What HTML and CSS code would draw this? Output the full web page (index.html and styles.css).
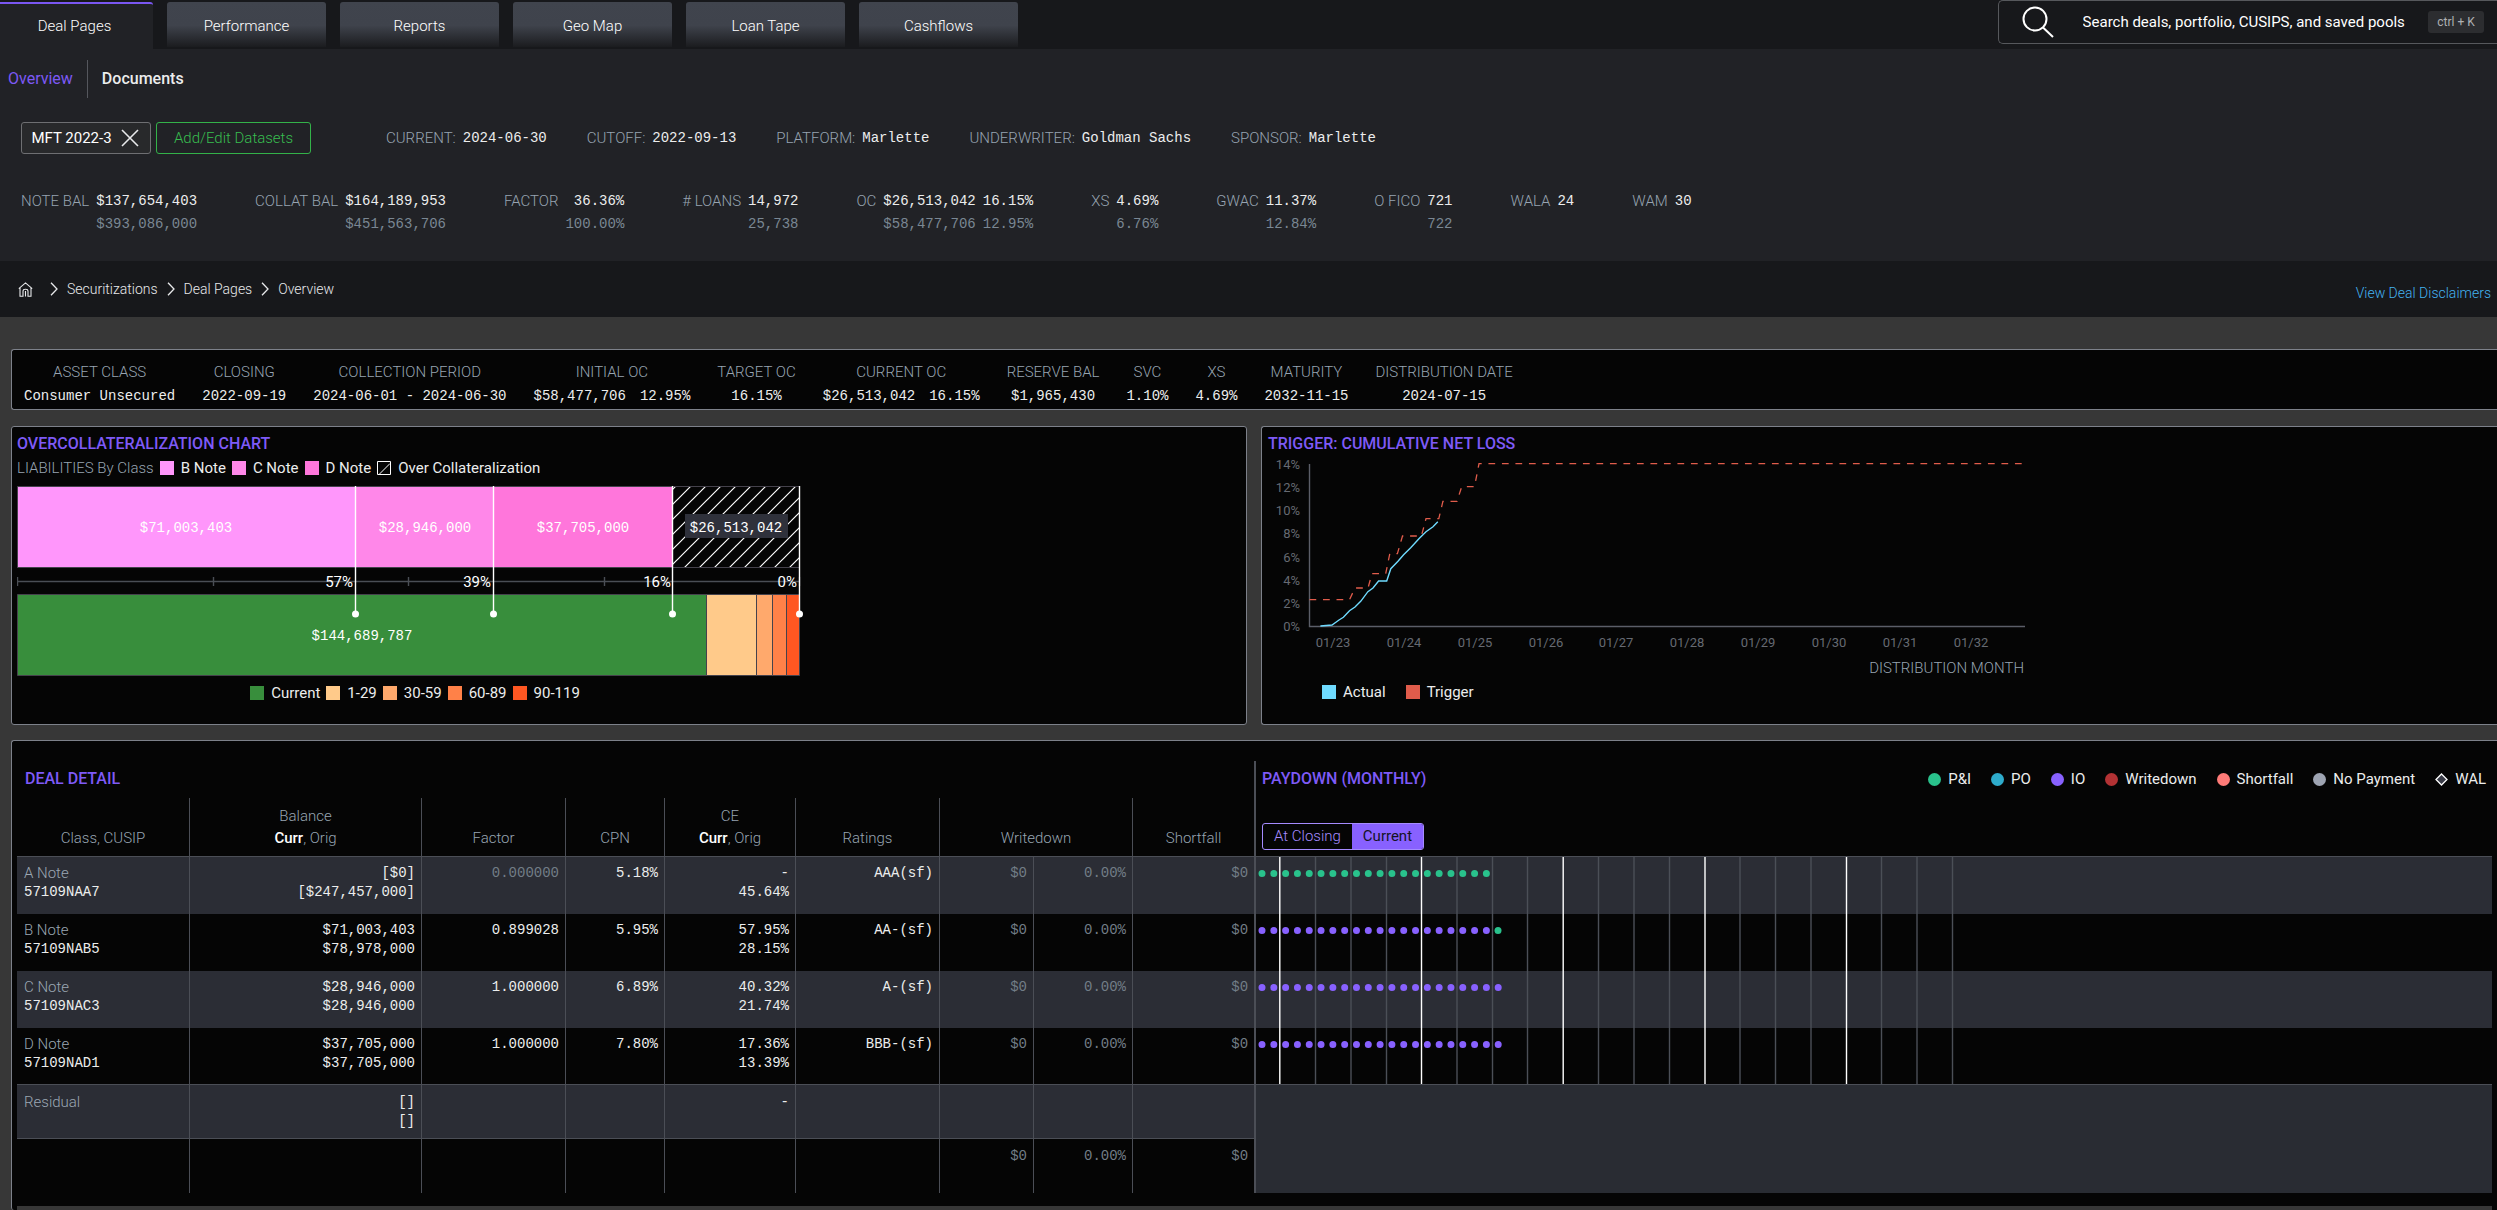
FILE: index.html
```html
<!DOCTYPE html>
<html lang="en">
<head>
<meta charset="utf-8">
<meta name="viewport" content="width=device-width, initial-scale=1">
<title>MFT 2022-3 | Deal Pages</title>
<link rel="stylesheet" href="styles.css">
</head>
<body>
<header class="topbar">
  <nav class="tabs" aria-label="Main">
    <a class="tab tab-active" href="#deal">Deal Pages</a>
    <a class="tab" href="#performance">Performance</a>
    <a class="tab" href="#reports">Reports</a>
    <a class="tab" href="#geo">Geo Map</a>
    <a class="tab" href="#tape">Loan Tape</a>
    <a class="tab" href="#cashflows">Cashflows</a>
  </nav>
  <label class="search">
    <svg class="search-icon" width="32" height="32" viewBox="0 0 32 32" fill="none" stroke="#fff" stroke-width="2" aria-hidden="true"><circle cx="13" cy="13" r="11.5"/><path d="M21 21.5L31 31"/></svg>
    <input class="search-input" type="text" aria-label="Search" placeholder="Search deals, portfolio, CUSIPS, and saved pools">
    <kbd class="kbd">ctrl + K</kbd>
  </label>
</header>

<section class="deal-head">
  <nav class="subnav" aria-label="Deal">
    <a class="subnav-link subnav-active" href="#overview">Overview</a>
    <a class="subnav-link" href="#documents">Documents</a>
  </nav>
  <div class="deal-row">
    <div class="dataset-actions">
      <button class="chip" type="button">MFT 2022-3
        <svg width="18" height="18" viewBox="0 0 18 18" fill="none" stroke="#e8e9eb" stroke-width="1.6" aria-hidden="true"><path d="M1 1l16 16M17 1L1 17"/></svg>
      </button>
      <button class="chip chip-add" type="button">Add/Edit Datasets</button>
    </div>
    <dl class="facts">
      <div class="fact"><dt>CURRENT:</dt><dd>2024-06-30</dd></div>
      <div class="fact"><dt>CUTOFF:</dt><dd>2022-09-13</dd></div>
      <div class="fact"><dt>PLATFORM:</dt><dd>Marlette</dd></div>
      <div class="fact"><dt>UNDERWRITER:</dt><dd>Goldman Sachs</dd></div>
      <div class="fact"><dt>SPONSOR:</dt><dd>Marlette</dd></div>
    </dl>
  </div>
  <dl class="stats">
    <div class="stat"><dt>NOTE BAL</dt><dd>$137,654,403<span class="orig">$393,086,000</span></dd></div>
    <div class="stat"><dt>COLLAT BAL</dt><dd>$164,189,953<span class="orig">$451,563,706</span></dd></div>
    <div class="stat"><dt>FACTOR</dt><dd>36.36%<span class="orig">100.00%</span></dd></div>
    <div class="stat"><dt># LOANS</dt><dd>14,972<span class="orig">25,738</span></dd></div>
    <div class="stat"><dt>OC</dt><dd>$26,513,042<span class="orig">$58,477,706</span></dd><dd>16.15%<span class="orig">12.95%</span></dd></div>
    <div class="stat"><dt>XS</dt><dd>4.69%<span class="orig">6.76%</span></dd></div>
    <div class="stat"><dt>GWAC</dt><dd>11.37%<span class="orig">12.84%</span></dd></div>
    <div class="stat"><dt>O FICO</dt><dd>721<span class="orig">722</span></dd></div>
    <div class="stat"><dt>WALA</dt><dd>24</dd></div>
    <div class="stat"><dt>WAM</dt><dd>30</dd></div>
  </dl>
</section>

<div class="crumb-bar">
  <nav class="crumbs" aria-label="Breadcrumb">
    <a class="crumb-home" href="#home" aria-label="Home"><svg width="15" height="15" viewBox="0 0 15 15" fill="none" stroke="#e8e9eb" stroke-width="1.1" aria-hidden="true"><path d="M.8 6.6L7.5.9l6.7 5.7M2 5.8v8.5h3V9.2c0-1.2 1-1.9 2.500-1.900s2.500.7 2.500 1.900v5.100h3V5.8M7.5 9v5.500"/></svg></a>
    <svg class="chev" width="8" height="14" viewBox="0 0 8 14" aria-hidden="true"><path d="M1 .7L7 7l-6 6.3"/></svg>
    <a href="#securitizations">Securitizations</a>
    <svg class="chev" width="8" height="14" viewBox="0 0 8 14" aria-hidden="true"><path d="M1 .7L7 7l-6 6.3"/></svg>
    <a href="#deal">Deal Pages</a>
    <svg class="chev" width="8" height="14" viewBox="0 0 8 14" aria-hidden="true"><path d="M1 .7L7 7l-6 6.3"/></svg>
    <a href="#overview">Overview</a>
  </nav>
  <a class="disclaimers" href="#disclaimers">View Deal Disclaimers</a>
</div>

<main class="content">
  <dl class="panel summary">
    <div><dt>ASSET CLASS</dt><dd>Consumer Unsecured</dd></div>
    <div><dt>CLOSING</dt><dd>2022-09-19</dd></div>
    <div><dt>COLLECTION PERIOD</dt><dd>2024-06-01 - 2024-06-30</dd></div>
    <div><dt>INITIAL OC</dt><dd class="pair"><span>$58,477,706</span><span>12.95%</span></dd></div>
    <div><dt>TARGET OC</dt><dd>16.15%</dd></div>
    <div><dt>CURRENT OC</dt><dd class="pair"><span>$26,513,042</span><span>16.15%</span></dd></div>
    <div><dt>RESERVE BAL</dt><dd>$1,965,430</dd></div>
    <div><dt>SVC</dt><dd>1.10%</dd></div>
    <div><dt>XS</dt><dd>4.69%</dd></div>
    <div><dt>MATURITY</dt><dd>2032-11-15</dd></div>
    <div><dt>DISTRIBUTION DATE</dt><dd>2024-07-15</dd></div>
  </dl>

  <div class="charts">
    <section class="panel chart-panel">
      <h2 class="title">OVERCOLLATERALIZATION CHART</h2>
      <div class="legend">
        <span class="legend-head">LIABILITIES By Class</span>
        <span class="key"><i class="swatch sw-b"></i>B Note</span>
        <span class="key"><i class="swatch sw-c"></i>C Note</span>
        <span class="key"><i class="swatch sw-d"></i>D Note</span>
        <span class="key"><svg width="14" height="14" viewBox="0 0 14 14" fill="none" stroke="#fff" aria-hidden="true"><path d="M.5.5h13v13H.5zM2.5 13L13 2.5"/></svg>Over Collateralization</span>
      </div>
      <svg class="oc-chart" width="788" height="192" viewBox="0 0 788 192" role="img" aria-label="Liabilities and assets">
        <defs>
          <pattern id="hatch" width="15" height="15" patternUnits="userSpaceOnUse"><path d="M-1 16L16 -1M-1 1L1 -1M14 16L16 14" stroke="#fff" stroke-width="1.2"/></pattern>
        </defs>
        <g stroke="#45424c">
          <path fill="#ff96fb" d="M.5 1.5h338v81H.5z"/>
          <path fill="#ff87e9" d="M338.5 1.5h138v81h-138z"/>
          <path fill="#ff76db" d="M476.5 1.5h179v81h-179z"/>
          <path fill="url(#hatch)" d="M655.5 1.5h127v81h-127z"/>
          <path fill="#388e3c" d="M.5 109.5h689v81H.5z"/>
          <path fill="#ffca8a" d="M689.5 109.5h50v81h-50z"/>
          <path fill="#ffa96c" d="M739.5 109.5h16v81h-16z"/>
          <path fill="#ff8148" d="M755.5 109.5h14v81h-14z"/>
          <path fill="#ff5722" d="M769.5 109.5h13v81h-13z"/>
        </g>
        <path d="M.5 96.5h782M.5 92v9M196.5 92v9M391.5 92v9M587.5 92v9M782.5 92v9" stroke="#4a4e55" stroke-width="1.4" fill="none"/>
        <path d="M338.5 1v128M476.5 1v128M655.5 1v128M782.5 1v128" stroke="#fff" stroke-width="1.4"/>
        <g fill="#fff"><circle cx="338.5" cy="129" r="3.5"/><circle cx="476.5" cy="129" r="3.5"/><circle cx="655.5" cy="129" r="3.5"/><circle cx="782.5" cy="129" r="3.5"/></g>
        <path d="M668 29h103v24H668z" fill="#2f313b"/>
        <g class="svg-mono" text-anchor="middle"><text x="169" y="47">$71,003,403</text><text x="408" y="47">$28,946,000</text><text x="566" y="47">$37,705,000</text><text x="719" y="47">$26,513,042</text><text x="345" y="155">$144,689,787</text></g>
        <g class="svg-label" text-anchor="end"><text x="336" y="102">57%</text><text x="474" y="102">39%</text><text x="654" y="102">16%</text><text x="780" y="102">0%</text></g>
      </svg>
      <div class="legend legend-oc">
        <span class="key"><i class="swatch sw-current"></i>Current</span>
        <span class="key"><i class="swatch sw-29"></i>1-29</span>
        <span class="key"><i class="swatch sw-59"></i>30-59</span>
        <span class="key"><i class="swatch sw-89"></i>60-89</span>
        <span class="key"><i class="swatch sw-119"></i>90-119</span>
      </div>
    </section>

    <section class="panel chart-panel">
      <h2 class="title">TRIGGER: CUMULATIVE NET LOSS</h2>
      <svg class="loss-chart" width="760" height="224" viewBox="1268 456 760 224" role="img" aria-label="Cumulative net loss">
        <path d="M1309.5 464V626.5H2025" fill="none" stroke="#5b5e68" stroke-width="1.4"/>
        <g class="svg-axis" text-anchor="end"><text x="1300" y="469">14%</text><text x="1300" y="492">12%</text><text x="1300" y="515">10%</text><text x="1300" y="538">8%</text><text x="1300" y="562">6%</text><text x="1300" y="585">4%</text><text x="1300" y="608">2%</text><text x="1300" y="631">0%</text></g>
        <g class="svg-axis" text-anchor="middle"><text x="1333" y="647">01/23</text><text x="1404" y="647">01/24</text><text x="1475" y="647">01/25</text><text x="1546" y="647">01/26</text><text x="1616" y="647">01/27</text><text x="1687" y="647">01/28</text><text x="1758" y="647">01/29</text><text x="1829" y="647">01/30</text><text x="1900" y="647">01/31</text><text x="1971" y="647">01/32</text></g>
        <path d="M1309.5 599.7H1349.5L1355 588H1368L1372 573.7H1385.7L1389.8 553.7H1397.4L1402.5 536H1421.4L1426 518.7H1438.8L1442.9 501.3H1457L1461.7 486.7H1474.5L1479 463.7H2025" fill="none" stroke="#e05c4b" stroke-width="1.3" stroke-dasharray="6.75 6.75"/>
        <path d="M1320.4 626L1332 625L1339 620L1343.4 617.3L1349.5 610.7L1355 607L1360.7 601.3L1367.9 591.7L1373 588L1378.6 581H1386.7L1390.8 568.7L1398 561.3L1403.6 554.7L1410.7 547.7L1419.4 538.3L1426 531.7L1433 526.7L1437.8 521.7" fill="none" stroke="#6fdbff" stroke-width="1.4"/>
        <text class="svg-axis-title" x="2024" y="673" text-anchor="end">DISTRIBUTION MONTH</text>
      </svg>
      <div class="legend legend-loss">
        <span class="key"><i class="swatch sw-actual"></i>Actual</span>
        <span class="key"><i class="swatch sw-trigger"></i>Trigger</span>
      </div>
    </section>
  </div>

  <section class="panel detail">
    <svg class="sprite" width="0" height="0" aria-hidden="true">
      <symbol id="months" viewBox="0 0 720 57">
        <path d="M59.5 0v57M95 0v57M130.5 0v57M201 0v57M236.5 0v57M271.5 0v57M342.5 0v57M378 0v57M413.5 0v57M484 0v57M519.5 0v57M555 0v57M625.5 0v57M661 0v57M696.5 0v57" fill="none" stroke="#4b4f57" stroke-width="1.4"/>
        <path d="M23.8 0v57M165.5 0v57M307.2 0v57M449 0v57M590.5 0v57" fill="none" stroke="#fff" stroke-width="1.4"/>
      </symbol>
    </svg>
    <table class="deal-table">
      <colgroup><col class="c-class"><col class="c-balance"><col class="c-factor"><col class="c-cpn"><col class="c-ce"><col class="c-ratings"><col class="c-wd"><col class="c-wdp"><col class="c-short"><col></colgroup>
      <thead>
        <tr class="title-row">
          <th colspan="9" scope="colgroup"><h2 class="title">DEAL DETAIL</h2></th>
          <th class="pay-head" rowspan="2" scope="col">
            <div class="pay-box">
              <div class="pay-top">
                <h2 class="title">PAYDOWN (MONTHLY)</h2>
                <div class="legend legend-pay">
                  <span class="key"><i class="dot dot-pi"></i>P&amp;I</span>
                  <span class="key"><i class="dot dot-po"></i>PO</span>
                  <span class="key"><i class="dot dot-io"></i>IO</span>
                  <span class="key"><i class="dot dot-wd"></i>Writedown</span>
                  <span class="key"><i class="dot dot-sf"></i>Shortfall</span>
                  <span class="key"><i class="dot dot-np"></i>No Payment</span>
                  <span class="key"><svg width="13" height="13" viewBox="0 0 13 13" fill="#3a3c48" stroke="#fff" stroke-width="1.3" aria-hidden="true"><path d="M6.5 1L12 6.5L6.5 12L1 6.5z"/></svg>WAL</span>
                </div>
              </div>
              <div class="toggle" role="group" aria-label="Paydown basis"><button type="button">At Closing</button><button class="on" type="button">Current</button></div>
            </div>
          </th>
        </tr>
        <tr class="head-row">
          <th scope="col">Class, CUSIP</th>
          <th scope="col">Balance<br><b>Curr</b>, Orig</th>
          <th scope="col">Factor</th>
          <th scope="col">CPN</th>
          <th scope="col">CE<br><b>Curr</b>, Orig</th>
          <th scope="col">Ratings</th>
          <th scope="colgroup" colspan="2">Writedown</th>
          <th scope="col">Shortfall</th>
        </tr>
      </thead>
      <tbody>
        <tr class="alt">
          <td class="class-cell"><span class="note">A Note</span>57109NAA7</td><td>[$0]<br>[$247,457,000]</td><td class="dim">0.000000</td><td>5.18%</td><td>-<br>45.64%</td><td>AAA(sf)</td><td class="dim">$0</td><td class="dim">0.00%</td><td class="dim">$0</td>
          <td class="pay"><svg width="720" height="57" viewBox="0 0 720 57"><use href="#months" width="720" height="57"/><path class="run run-pi" d="M6 16.5H231"/></svg></td>
        </tr>
        <tr>
          <td class="class-cell"><span class="note">B Note</span>57109NAB5</td><td>$71,003,403<br>$78,978,000</td><td>0.899028</td><td>5.95%</td><td>57.95%<br>28.15%</td><td>AA-(sf)</td><td class="dim">$0</td><td class="dim">0.00%</td><td class="dim">$0</td>
          <td class="pay"><svg width="720" height="57" viewBox="0 0 720 57"><use href="#months" width="720" height="57"/><path class="run run-io" d="M6 16.5H231"/><path class="run run-pi" d="M242 16.5h1"/></svg></td>
        </tr>
        <tr class="alt">
          <td class="class-cell"><span class="note">C Note</span>57109NAC3</td><td>$28,946,000<br>$28,946,000</td><td>1.000000</td><td>6.89%</td><td>40.32%<br>21.74%</td><td>A-(sf)</td><td class="dim">$0</td><td class="dim">0.00%</td><td class="dim">$0</td>
          <td class="pay"><svg width="720" height="57" viewBox="0 0 720 57"><use href="#months" width="720" height="57"/><path class="run run-io" d="M6 16.5H243"/></svg></td>
        </tr>
        <tr class="ruled">
          <td class="class-cell"><span class="note">D Note</span>57109NAD1</td><td>$37,705,000<br>$37,705,000</td><td>1.000000</td><td>7.80%</td><td>17.36%<br>13.39%</td><td>BBB-(sf)</td><td class="dim">$0</td><td class="dim">0.00%</td><td class="dim">$0</td>
          <td class="pay"><svg width="720" height="56" viewBox="0 0 720 56"><use href="#months" width="720" height="57"/><path class="run run-io" d="M6 16.5H243"/></svg></td>
        </tr>
        <tr class="alt ruled short">
          <td class="class-cell"><span class="note">Residual</span></td><td>[]<br>[]</td><td></td><td></td><td>-</td><td></td><td></td><td></td><td></td>
          <td class="pay pay-empty" rowspan="2"></td>
        </tr>
        <tr class="short">
          <td></td><td></td><td></td><td></td><td></td><td></td><td class="dim">$0</td><td class="dim">0.00%</td><td class="dim">$0</td>
        </tr>
      </tbody>
    </table>
    <div class="next-section"></div>
  </section>
</main>
</body>
</html>
```
FILE: styles.css
```css
*{box-sizing:border-box}
html{background:#373737}
body{
  margin:0;
  background:#373737;
  color:#eceded;
  font:400 15px/24px Roboto,"Liberation Sans",sans-serif;
}
a{color:inherit;text-decoration:none}
svg{display:block;flex:none}
dl,dd,h2{margin:0}
dt{color:#97a4b1;font-weight:300}
dd,td,.svg-mono{font-family:"Liberation Mono",monospace;font-size:14px}
button{font:inherit;color:inherit;cursor:pointer;margin:0}

/* top bar */
.topbar{display:flex;justify-content:space-between;align-items:flex-start;height:49px;background:#17181b}
.tabs{display:flex;gap:14px;align-self:stretch;padding:2px 0 0}
.tab{
  width:159px;height:45px;padding-top:12px;text-align:center;font-weight:300;color:#fff;
  border-radius:3px 3px 0 0;
  background:linear-gradient(#40444d 0,#3f434c 52%,#1b1c1f 100%);
}
.tab-active{width:153px;height:47px;padding:10px 4px 0 0;border-top:2px solid #7b57f2;background:#212226;border-radius:0 3px 0 0}
.search{
  display:flex;align-items:center;width:20%;height:44px;padding:0 13px 0 23px;
  border:1px solid #56585c;border-right:0;border-radius:5px 0 0 5px;
}
.search-icon{margin-right:29px}
.search-input{flex:1;min-width:0;padding:0;border:0;outline:0;background:none;color:#fff;font:inherit}
.search-input::placeholder{color:#fff;opacity:1}
.kbd{width:56px;height:22px;border-radius:3px;background:#2c2d30;color:#aeb0b3;font:400 12px/22px Roboto,sans-serif;text-align:center}

/* deal header */
.deal-head{padding:11px 8px 25px;background:#212226}
.subnav{display:flex;font-size:16px}
.subnav-link{padding:7px 14px;font-weight:500}
.subnav-link:first-child{padding-left:0;border-right:1px solid #55575d}
.subnav-active{color:#7d59f5;font-weight:400}
.deal-row{display:flex;align-items:center;gap:75px;margin-top:24px;padding-left:13px}
.dataset-actions{display:flex;gap:5px}
.chip{
  display:flex;align-items:center;justify-content:center;gap:9px;height:32px;width:130px;padding:0 2px 0 0;
  border:1px solid #6e6f72;border-radius:3px;background:#28292b;color:#fff;
}
.chip-add{width:155px;padding:0;border-color:#33b249;background:none;color:#38bd4f;font-weight:300}
.facts{display:flex;gap:40px}
.fact{display:flex;gap:7px}
.stats{display:flex;gap:58px;margin-top:36px;padding-left:13px;line-height:23px}
.stat{display:flex;gap:7px}
.stat dd{text-align:right}
.orig{display:block;color:#7a8793}

/* breadcrumb */
.crumb-bar{display:flex;justify-content:space-between;align-items:center;height:56px;padding:0 6px 0 18px;background:#17181b;font-size:14px;font-weight:300}
.crumbs{display:flex;align-items:center;gap:9px;color:#e8e9eb}
.crumb-home{margin-right:8px}
.chev{fill:none;stroke:#e8e9eb;stroke-width:1.3}
.disclaimers{padding-top:7px;color:#43b2f0}

/* panels */
.content{padding:32px 0 0 11px}
.panel{background:#050505;border:1px solid #7d818a;border-right:0;border-radius:3px 0 0 3px}
.title{font-size:16px;font-weight:500;line-height:24px;color:#7e5af7}
.summary{display:flex;gap:27px;padding:10px 12px 1px;text-align:center;white-space:nowrap}
.pair{display:flex;gap:14px}
.charts{display:grid;grid-template-columns:1fr 1fr;gap:14px;margin:16px 0 15px}
.chart-panel{height:299px;padding:5px 6px}
.chart-panel:first-child{padding-left:5px;border-right:1px solid #7d818a;border-radius:3px}
.legend{display:flex;align-items:center;gap:6px;white-space:nowrap}
.legend-head{color:#97a4b1;font-weight:300}
.key{display:flex;align-items:center;gap:7px}
.swatch{width:14px;height:14px}
.sw-b{background:#ff96fb}
.sw-c{background:#ff87e9}
.sw-d{background:#ff76db}
.sw-current{background:#388e3c}
.sw-29{background:#ffca8a}
.sw-59{background:#ffa96c}
.sw-89{background:#ff8148}
.sw-119{background:#ff5722}
.sw-actual{background:#6fdbff}
.sw-trigger{background:#e05c4b}
.oc-chart{margin-top:5px}
.legend-oc{width:796px;margin-top:4px;justify-content:center}
.legend-loss{gap:20px;padding-left:54px}
.svg-mono,.svg-label{fill:#fff}
.svg-axis{fill:#666a72;font-size:13px}
.svg-axis-title{fill:#97a4b1;font-weight:300}

/* deal detail table */
.detail{padding:20px 0 0 5px;border-bottom:0}
.sprite{position:absolute}
.deal-table{width:100%;table-layout:fixed;border-collapse:separate;border-spacing:0;padding-right:5px}
.c-class{width:173px}
.c-balance{width:232px}
.c-factor,.c-ratings{width:144px}
.c-cpn,.c-wdp{width:99px}
.c-ce{width:131px}
.c-wd{width:94px}
.c-short{width:121px}
th{padding:0;font-weight:300;text-align:center;vertical-align:bottom}
.title-row th{height:37px;padding:6px 8px 0;text-align:left;vertical-align:top}
.head-row th{height:59px;padding-bottom:7px;line-height:22px;color:#97a4b1;border-right:1px solid #4b4e56;border-bottom:1px solid #4b4e56}
.head-row th:last-child{border-right:0}
.head-row b{color:#fff;font-weight:500}
.title-row .pay-head{height:96px;padding:0;border-left:2px solid #4b4e56;border-bottom:1px solid #4b4e56}
.pay-box{display:flex;flex-direction:column;justify-content:space-between;height:95px;padding:6px}
.pay-top{display:flex;justify-content:space-between}
.legend-pay{gap:20px;font-weight:400}
.dot{width:13px;height:13px;border-radius:50%}
.dot-pi{background:#29c28c}
.dot-po{background:#2eaccc}
.dot-io{background:#8861ff}
.dot-wd{background:#b33234}
.dot-sf{background:#ff7b78}
.dot-np{background:#9ea4b2}
.toggle{display:flex;align-self:flex-start;border:1px solid #a58bff;border-radius:3px;overflow:hidden}
.toggle button{padding:0 11px;border:0;background:none;color:#a58bff;font-weight:300;line-height:25px}
.toggle .on{background:#8861ff;color:#15131f;font-weight:400}
td{height:57px;padding:7px 6px 0;line-height:19px;text-align:right;vertical-align:top;border-right:1px solid #4b4e56}
td:nth-child(9){border-right:0}
.class-cell{padding-left:7px;text-align:left}
.note{display:block;color:#9ba7b3;font:300 15px/19px Roboto,sans-serif}
.dim{color:#727d87}
.alt td{background:#2b2d35}
.ruled td{border-bottom:1px solid #4b4e56}
.short td{height:54px;padding-top:8px}
td.pay{padding:0;border-right:0;border-left:2px solid #4b4e56}
.alt .pay-empty{background:#292c33;border-bottom:0}
.run{fill:none;stroke-width:7;stroke-linecap:round;stroke-dasharray:0 11.81}
.run-pi{stroke:#29c28c}
.run-io{stroke:#8861ff}
.next-section{height:4px;margin:13px 5px 0 0;background:#373737}
```
